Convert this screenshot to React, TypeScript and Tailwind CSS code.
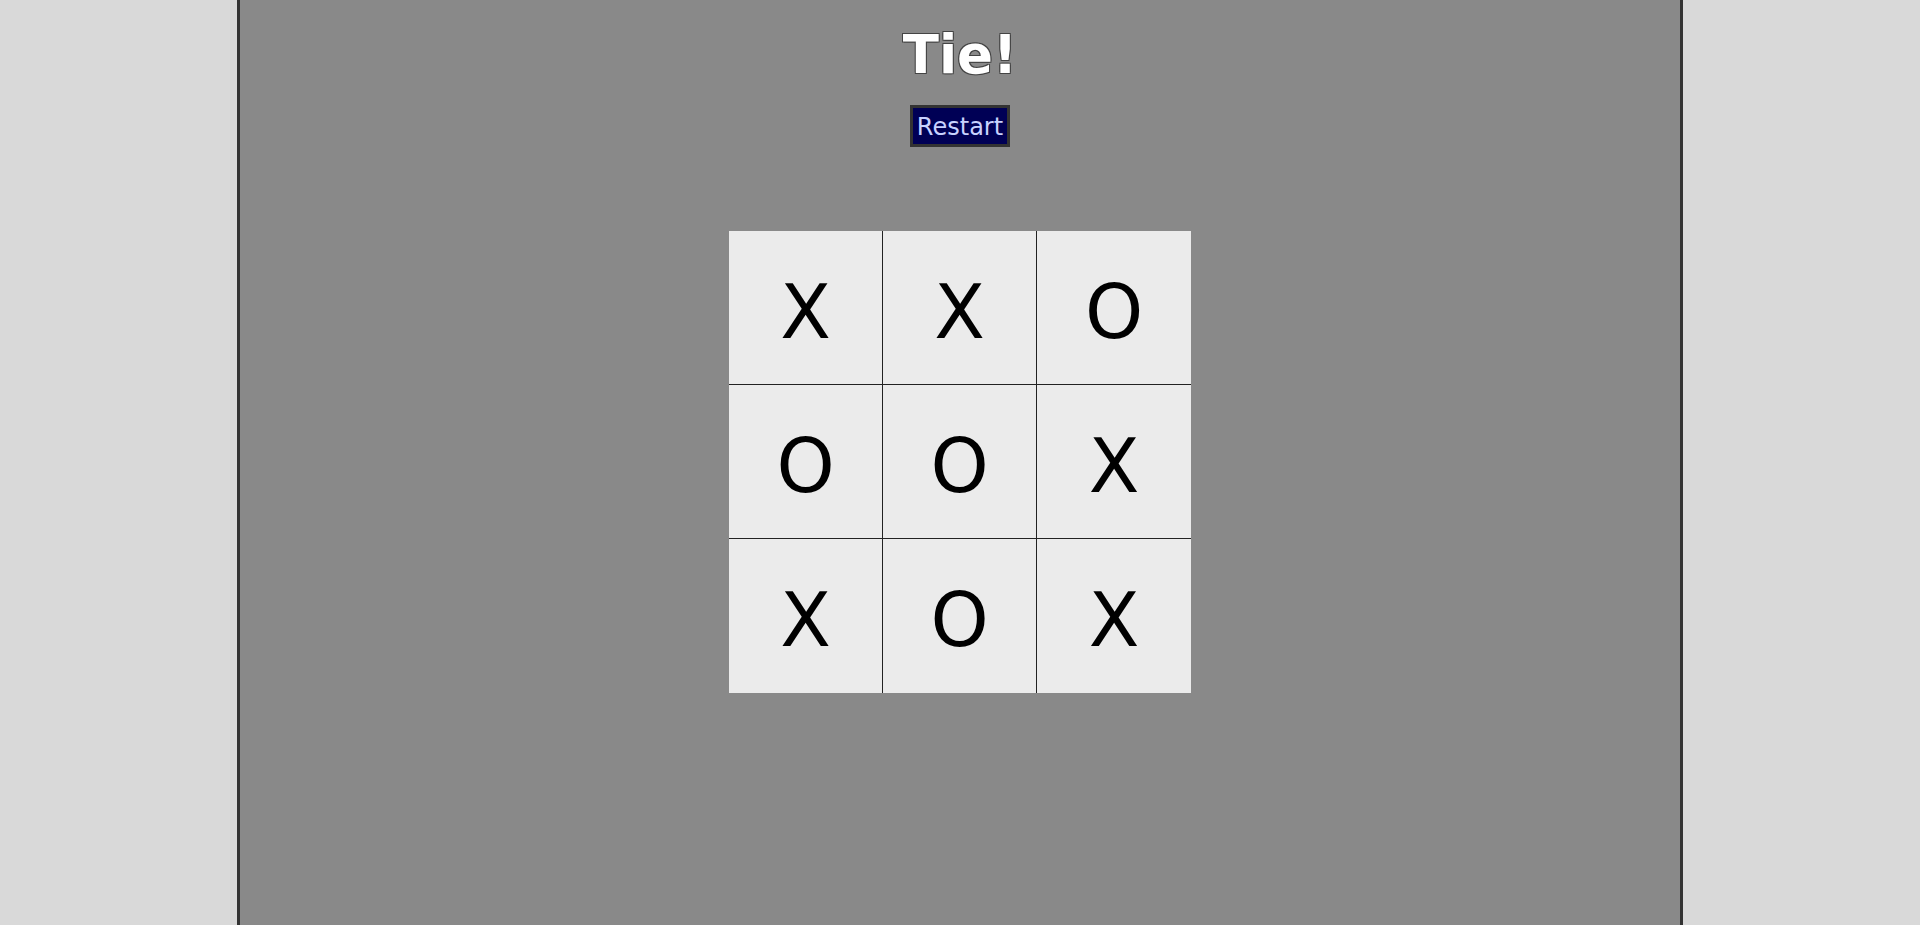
import React from 'react';

const board: string[] = ['X', 'X', 'O', 'O', 'O', 'X', 'X', 'O', 'X'];

const App: React.FC = () => {
  return (
    <div className="min-h-screen bg-[#d9d9d9] font-['DejaVu_Sans',sans-serif]">
      <div className="mx-auto flex min-h-screen w-[1446px] flex-col items-center border-x-[3px] border-[#333333] bg-[#898989]">
        <h1 className="mt-[24px] text-[53px] font-bold leading-[62px] text-white [text-shadow:1px_1px_0_#444,-1px_-1px_0_#444,1px_-1px_0_#444,-1px_1px_0_#444]">
          Tie!
        </h1>
        <button className="mt-[19px] flex h-[42px] w-[100px] items-center justify-center border-[3px] border-[#333333] bg-[#000055] pt-[2px] text-[24px] leading-none text-[#c8d2ff]">
          Restart
        </button>

        <div className="mt-[84px] grid w-[462px] grid-cols-3">
          {board.map((v, i) => (
            <div
              key={i}
              className={
                'flex h-[154px] items-center justify-center bg-[#ebebeb] pt-[8px] text-[74px] leading-none text-black ' +
                (i % 3 !== 2 ? 'border-r border-[#222222] ' : '') +
                (i < 6 ? 'border-b border-[#222222]' : '')
              }
            >
              {v}
            </div>
          ))}
        </div>
      </div>
    </div>
  );
};

export default App;
